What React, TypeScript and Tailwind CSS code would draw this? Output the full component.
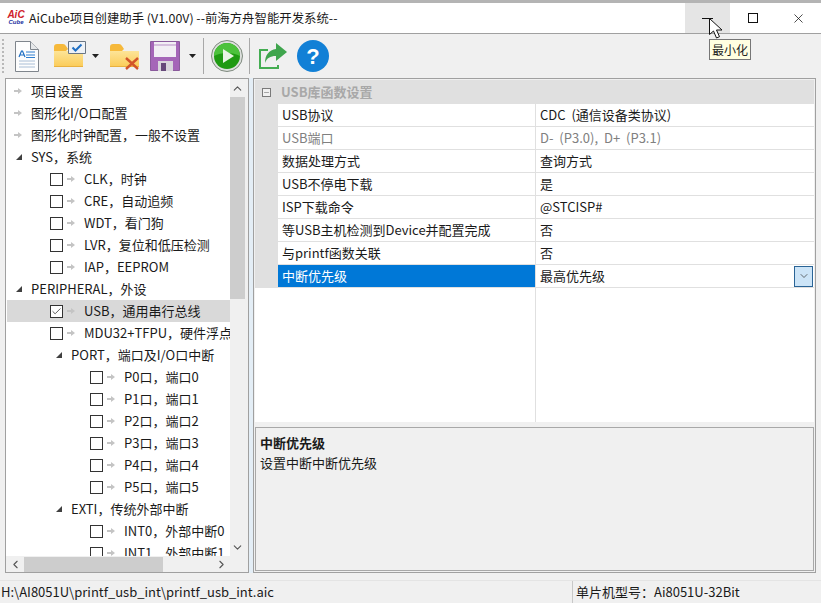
import React from 'react';
import { Check, ChevronDown, ChevronUp, ChevronLeft, ChevronRight, Minus, X } from 'lucide-react';

type TreeRow = { label: string; level: 0 | 1 | 2 | 3; node?: 'arrow' | 'open' | 'check'; checked?: boolean; selected?: boolean };

const treeRows: TreeRow[] = [
  { label: '项目设置', level: 0, node: 'arrow' },
  { label: '图形化I/O口配置', level: 0, node: 'arrow' },
  { label: '图形化时钟配置，一般不设置', level: 0, node: 'arrow' },
  { label: 'SYS，系统', level: 0, node: 'open' },
  { label: 'CLK，时钟', level: 1, node: 'check' },
  { label: 'CRE，自动追频', level: 1, node: 'check' },
  { label: 'WDT，看门狗', level: 1, node: 'check' },
  { label: 'LVR，复位和低压检测', level: 1, node: 'check' },
  { label: 'IAP，EEPROM', level: 1, node: 'check' },
  { label: 'PERIPHERAL，外设', level: 0, node: 'open' },
  { label: 'USB，通用串行总线', level: 1, node: 'check', checked: true, selected: true },
  { label: 'MDU32+TFPU，硬件浮点运算', level: 1, node: 'check' },
  { label: 'PORT，端口及I/O口中断', level: 2, node: 'open' },
  { label: 'P0口，端口0', level: 3, node: 'check' },
  { label: 'P1口，端口1', level: 3, node: 'check' },
  { label: 'P2口，端口2', level: 3, node: 'check' },
  { label: 'P3口，端口3', level: 3, node: 'check' },
  { label: 'P4口，端口4', level: 3, node: 'check' },
  { label: 'P5口，端口5', level: 3, node: 'check' },
  { label: 'EXTI，传统外部中断', level: 2, node: 'open' },
  { label: 'INT0，外部中断0', level: 3, node: 'check' },
  { label: 'INT1，外部中断1', level: 3, node: 'check' },
];

const props = [
  { name: 'USB协议', value: 'CDC (通信设备类协议)' },
  { name: 'USB端口', value: 'D- (P3.0), D+ (P3.1)', disabled: true },
  { name: '数据处理方式', value: '查询方式' },
  { name: 'USB不停电下载', value: '是' },
  { name: 'ISP下载命令', value: '@STCISP#' },
  { name: '等USB主机检测到Device并配置完成', value: '否' },
  { name: '与printf函数关联', value: '否' },
  { name: '中断优先级', value: '最高优先级', selected: true },
];

const Arrow = () => (
  <svg width="8" height="8" viewBox="0 0 8 8" className="shrink-0">
    <path d="M0 3h4V1l4 3-4 3V5H0z" fill="#c4c4c4" />
  </svg>
);

const Expander = () => (
  <svg width="6" height="6" viewBox="0 0 6 6" className="shrink-0">
    <path d="M6 0v6H0z" fill="#404040" />
  </svg>
);

const CheckBox = ({ checked }: { checked?: boolean }) => (
  <span className="flex h-[13px] w-[13px] shrink-0 items-center justify-center border border-[#333333] bg-white">
    {checked && <Check size={11} strokeWidth={1.6} color="#222222" />}
  </span>
);

const Row = ({ row }: { row: TreeRow }) => {
  const pad = ['pl-px', 'pl-[43px]', 'pl-[49px]', 'pl-[83px]'][row.level];
  return (
    <div className={`flex h-[22px] w-[300px] shrink-0 items-center ${pad} ${row.selected ? 'bg-[#d9d9d9]' : ''}`}>
      {row.node === 'arrow' && (
        <span className="ml-[6px] mr-[10px] flex w-[7px]">
          <Arrow />
        </span>
      )}
      {row.node === 'open' && (
        <span className={`mr-[9px] flex ${row.level === 0 ? 'ml-[8px]' : 'ml-0'}`}>
          <Expander />
        </span>
      )}
      {row.node === 'check' && (
        <span className="flex w-[34px] items-center">
          <CheckBox checked={row.checked} />
          <span className="ml-[4px]">
            <Arrow />
          </span>
        </span>
      )}
      <span className="whitespace-nowrap">{row.label}</span>
    </div>
  );
};

const NewFileIcon = () => (
  <svg width="24" height="31" viewBox="0 0 24 31">
    <path d="M.5.5h15l8 8v22H.5z" fill="#fdfdfd" stroke="#7f858c" />
    <path d="M15.500.5v8h8" fill="#e6e8ea" stroke="#7f858c" />
    <path d="M4 16l2.500-6h1l2.500 6M5 14h4" fill="none" stroke="#1f6fc4" strokeWidth="1.2" />
    <path d="M11 11h9M11 14h9M11 16.500h9" stroke="#2f7fd0" />
    <path d="M4 20h16M4 23h16M4 26h16" stroke="#a9bed6" />
  </svg>
);

const Folder = ({ id, children }: { id: string; children?: React.ReactNode }) => (
  <svg width="32" height="30" viewBox="0 0 32 30" className="overflow-visible">
    <defs>
      <linearGradient id={id} x1="0" y1="0" x2="0" y2="1">
        <stop offset="0" stopColor="#fde9a4" />
        <stop offset="1" stopColor="#fbcb57" />
      </linearGradient>
    </defs>
    <path d="M0 7h10l2 3h17v16H0z" fill={`url(#${id})`} />
    <path d="M0 6q0-3 3-3h6q2 0 3 2l2 3-2 2H0z" fill="#f6b93b" />
    <path d="M0 25.500h29" stroke="#e9b13f" />
    {children}
  </svg>
);

const SaveIcon = () => (
  <svg width="30" height="30" viewBox="0 0 30 30">
    <path d="M.5.5h29v29H.5z" fill="#a565b8" stroke="#8a5a9c" />
    <path d="M4 1h22v15H4z" fill="#f2eef4" />
    <path d="M4 4h22" stroke="#b98fc6" />
    <path d="M8 20h15v10H8z" fill="#d9d5dc" />
    <path d="M11 22h5v8h-5z" fill="#66497a" />
  </svg>
);

const RunIcon = () => (
  <svg width="32" height="32" viewBox="0 0 32 32">
    <circle cx="16" cy="16" r="15.500" fill="#dde0dd" stroke="#7f8a7f" />
    <circle cx="16" cy="16" r="13" fill="#1f9a12" />
    <path d="M3 16a13 13 0 0 1 26 0c-7-4-19-4-26 0z" fill="#4cc23c" />
    <path d="M12 9l11 7-11 7z" fill="#e9f4e4" />
  </svg>
);

const ExportIcon = () => (
  <svg width="30" height="30" viewBox="0 0 30 30">
    <path d="M20 24v3H2V9h8" fill="none" stroke="#44ad52" strokeWidth="2" />
    <path d="M18 2l11 9-11 9v-5c-6 0-9 2-11 7 0-8 4-13 11-14z" fill="#3fa54d" />
  </svg>
);

const HelpIcon = () => (
  <span className="flex h-8 w-8 items-center justify-center rounded-full bg-[#1280d6] font-['Liberation_Sans',sans-serif] text-[22px] font-bold text-white">
    ?
  </span>
);

const DropCaret = () => (
  <svg width="7" height="4" viewBox="0 0 7 4">
    <path d="M0 0h7L3.500 4z" fill="#222222" />
  </svg>
);

const ToolSep = () => <span className="h-[36px] w-px bg-[#a8a8a8]" />;

const gripDots = [0, 1, 2, 3, 4, 5, 6, 7, 8];

export default function App() {
  return (
    <div className="relative flex h-[603px] w-[821px] flex-col overflow-hidden bg-[#f0f0f0] font-['Noto_Sans_CJK_SC','Noto_Sans',sans-serif] text-[13px] text-[#1a1a1a]">
      {/* title bar */}
      <div className="h-[3px] shrink-0 bg-[#b4b4b4]" />
      <div className="flex h-[31px] shrink-0 items-center border-b border-[#a0a0a0] bg-white">
        <div className="ml-[8px] flex w-[16px] flex-col items-center font-['Liberation_Sans',sans-serif] italic">
          <span className="text-[10px] font-bold leading-[8px] text-[#d0202a]">AiC</span>
          <span className="text-[6px] font-bold leading-[7px] text-[#2030a0]">Cube</span>
        </div>
        <span className="ml-[5px] whitespace-nowrap text-[12.4px]">AiCube项目创建助手 (V1.00V) --前海方舟智能开发系统--</span>
        <div className="ml-auto flex h-full">
          <div className="flex w-[45px] items-center justify-center bg-[#e5e5e5]">
            <span className="h-px w-[11px] bg-[#111111]" />
          </div>
          <div className="flex w-[46px] items-center justify-center">
            <span className="h-[10px] w-[10px] border border-[#111111]" />
          </div>
          <div className="flex w-[45px] items-center justify-center">
            <X size={15} strokeWidth={1.2} color="#111111" />
          </div>
        </div>
      </div>

      {/* toolbar */}
      <div className="flex h-[44px] shrink-0 items-center">
        <div className="ml-[2px] flex w-[2px] flex-col gap-[2px]">
          {gripDots.map((d) => (
            <span key={d} className="h-[2px] w-[2px] bg-[#b8b8b8]" />
          ))}
        </div>
        <span className="ml-[11px] flex"><NewFileIcon /></span>
        <span className="ml-[15px] flex items-center">
          <Folder id="folderOpen">
            <path d="M14.500.5h17v12h-17z" fill="#eef2f7" stroke="#6a7684" />
            <path d="M18.500 6.500l3 3 6-6" fill="none" stroke="#1f6fc4" strokeWidth="2" />
          </Folder>
          <span className="ml-[6px] flex"><DropCaret /></span>
        </span>
        <span className="ml-[11px] flex">
          <Folder id="folderDel">
            <path d="M16 17l12 11M28 17L16 28" stroke="#d2552a" strokeWidth="2.400" />
          </Folder>
        </span>
        <span className="ml-[8px] flex items-center">
          <SaveIcon />
          <span className="ml-[9px] flex"><DropCaret /></span>
        </span>
        <span className="ml-[7px] flex"><ToolSep /></span>
        <span className="ml-[7px] flex"><RunIcon /></span>
        <span className="ml-[6px] flex"><ToolSep /></span>
        <span className="ml-[8px] flex"><ExportIcon /></span>
        <span className="ml-[9px] flex"><HelpIcon /></span>
      </div>

      {/* main */}
      <div className="flex h-[495px] shrink-0 pl-[5px]">
        <div className="flex h-full w-[244px] shrink-0 flex-col border border-[#a0a0a0] bg-white">
          <div className="flex min-h-0 flex-1">
            <div className="flex min-w-0 flex-1 flex-col overflow-hidden pl-px pt-px">
              {treeRows.map((row) => (
                <Row key={row.label} row={row} />
              ))}
            </div>
            <div className="flex w-[18px] shrink-0 flex-col bg-[#f0f0f0] pr-[3px]">
              <div className="flex h-[18px] w-full shrink-0 items-center justify-center">
                <ChevronUp size={13} strokeWidth={2} color="#555555" />
              </div>
              <div className="h-[202px] w-full shrink-0 bg-[#cdcdcd]" />
              <div className="flex-1" />
              <div className="flex h-[18px] w-full shrink-0 items-center justify-center">
                <ChevronDown size={13} strokeWidth={2} color="#555555" />
              </div>
            </div>
          </div>
          <div className="flex h-[16px] shrink-0 items-center bg-[#f0f0f0] pr-[18px]">
            <div className="flex w-[18px] shrink-0 items-center justify-center">
              <ChevronLeft size={13} strokeWidth={2} color="#555555" />
            </div>
            <div className="h-[15px] w-[139px] bg-[#cdcdcd]" />
            <div className="flex-1" />
            <div className="flex w-[18px] shrink-0 items-center justify-center">
              <ChevronRight size={13} strokeWidth={2} color="#555555" />
            </div>
          </div>
        </div>

        <div className="w-[4px] shrink-0 bg-[#e4eef6]" />

        <div className="flex h-full w-[563px] shrink-0 flex-col border border-[#a0a0a0] p-px">
          <div className="flex min-h-0 flex-1 flex-col bg-white">
            <div className="flex h-[24px] shrink-0 items-center bg-[#e0e0e0]">
              <span className="ml-[7px] flex h-[9px] w-[9px] items-center justify-center border border-[#7a7a7a] bg-[#f0f0f0]">
                <Minus size={7} strokeWidth={1.5} color="#444444" />
              </span>
              <span className="ml-[10px] font-bold text-[#a8a8a8]">USB库函数设置</span>
            </div>
            {props.map((p) => (
              <div key={p.name} className="flex h-[23px] shrink-0">
                <div className="w-[23px] shrink-0 bg-[#e0e0e0]" />
                <div
                  className={`flex w-[258px] shrink-0 items-center border-b border-r border-[#e0e0e0] pl-[4px] ${
                    p.selected ? 'bg-[#0078d7] text-white' : p.disabled ? 'text-[#808080]' : ''
                  }`}
                >
                  {p.name}
                </div>
                <div className={`flex flex-1 items-center border-b border-[#e0e0e0] pl-[4px] [word-spacing:3px] ${p.disabled ? 'text-[#808080]' : ''}`}>
                  {p.value}
                  {p.selected && (
                    <span className="ml-auto mr-px flex h-[21px] w-[19px] items-center justify-center border border-[#2a6496] bg-[#cce4f7]">
                      <ChevronDown size={12} strokeWidth={1.4} color="#333333" />
                    </span>
                  )}
                </div>
              </div>
            ))}
            <div className="flex min-h-0 flex-1">
              <div className="w-[281px] shrink-0 border-r border-[#e0e0e0]" />
            </div>
          </div>
          <div className="h-[5px] shrink-0" />
          <div className="h-[144px] shrink-0 border border-[#a8a8a8] bg-[#f0f0f0] px-[4px] pt-[5px] leading-[20px]">
            <div className="font-bold">中断优先级</div>
            <div>设置中断中断优先级</div>
          </div>
        </div>
      </div>

      {/* status bar */}
      <div className="mt-auto flex h-[23px] shrink-0 items-center border-t border-[#e4e4e4] pl-px">
        <span className="w-[571px] shrink-0 whitespace-nowrap">H:\AI8051U\printf_usb_int\printf_usb_int.aic</span>
        <span className="flex h-full items-center whitespace-nowrap border-l border-[#c8c8c8] pl-[3px]">单片机型号：Ai8051U-32Bit</span>
      </div>

      {/* tooltip and pointer */}
      <div className="absolute left-[709px] top-[39px] border border-[#767676] bg-[#ffffe1] px-[2px] text-[12px] leading-[19px] text-[#222222]">
        最小化
      </div>
      <svg width="14" height="22" viewBox="0 0 14 22" className="absolute left-[709px] top-[18px]">
        <path d="M.5.5v16l4-3.500 3 7 3-1.300-3-6.700h5.500z" fill="#ffffff" stroke="#111111" />
      </svg>
    </div>
  );
}
